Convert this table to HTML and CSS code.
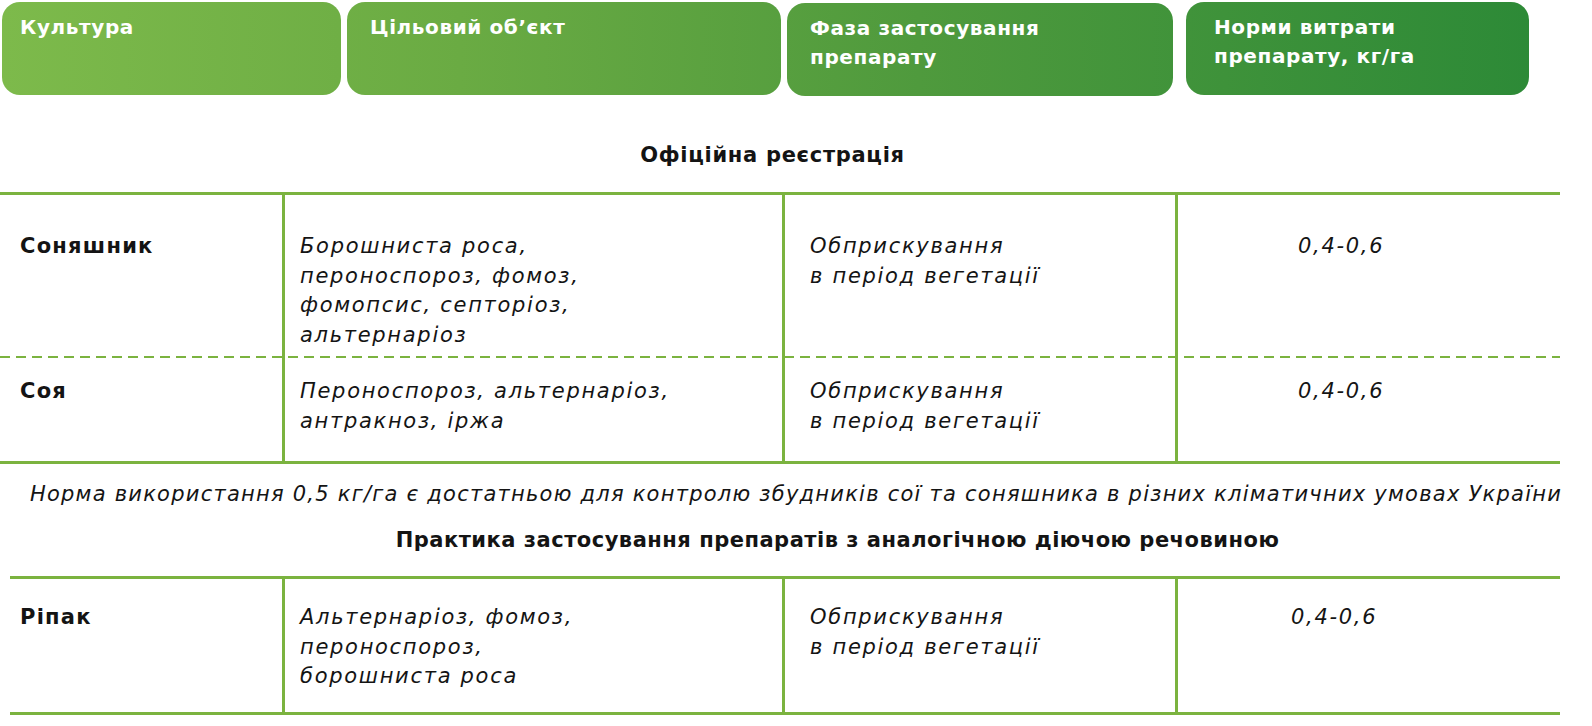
FILE: index.html
```html
<!DOCTYPE html>
<html lang="uk">
<head>
<meta charset="utf-8">
<title>Регламент застосування</title>
<link rel="stylesheet" href="styles.css">
</head>
<body>
<div class="page">
  <div class="head-row">
    <div class="hcell h1">Культура</div>
    <div class="hcell h2">Цільовий об’єкт</div>
    <div class="hcell h3">Фаза застосування<br>препарату</div>
    <div class="hcell h4">Норми витрати<br>препарату, кг/га</div>
  </div>

  <div class="section-title st1">Офіційна реєстрація</div>

  <div class="table t1">
    <div class="row r-sun dashed">
      <div class="cell c1 crop">Соняшник</div>
      <div class="cell c2 it">Борошниста роса,<br>пероноспороз, фомоз,<br>фомопсис, септоріоз,<br>альтернаріоз</div>
      <div class="cell c3 it">Обприскування<br>в період вегетації</div>
      <div class="cell c4 it">0,4-0,6</div>
    </div>
    <div class="row r-soy">
      <div class="cell c1 crop">Соя</div>
      <div class="cell c2 it">Пероноспороз, альтернаріоз,<br>антракноз, іржа</div>
      <div class="cell c3 it">Обприскування<br>в період вегетації</div>
      <div class="cell c4 it">0,4-0,6</div>
    </div>
  </div>

  <div class="note">Норма використання 0,5 кг/га є достатньою для контролю збудників сої та соняшника в різних кліматичних умовах України</div>

  <div class="section-title st2">Практика застосування препаратів з аналогічною діючою речовиною</div>

  <div class="table t2">
    <div class="row r-rape">
      <div class="cell c1 crop">Ріпак</div>
      <div class="cell c2 it">Альтернаріоз, фомоз,<br>пероноспороз,<br>борошниста роса</div>
      <div class="cell c3 it">Обприскування<br>в період вегетації</div>
      <div class="cell c4 it c4b">0,4-0,6</div>
    </div>
  </div>
</div>
</body>
</html>
```
FILE: styles.css
```css
html, body {
  margin: 0;
  padding: 0;
  background: #ffffff;
}

body {
  font-family: "DejaVu Sans", "Noto Sans", sans-serif;
  color: #141414;
  font-size: 21px;
}

.page {
  width: 1592px;
  overflow: hidden;
}

/* header */
.head-row {
  display: flex;
  margin-top: 2px;
  height: 93px;
}

.hcell {
  box-sizing: border-box;
  height: 93px;
  border-radius: 18px;
  color: #ffffff;
  font-weight: 700;
  font-size: 20px;
  letter-spacing: 0.6px;
  line-height: 29px;
  padding-top: 11px;
  background-image: linear-gradient(90deg, #7dba4b 0%, #6aab43 30%, #4f9a3d 60%, #2d8a37 100%);
  background-size: 1528px 100%;
  background-repeat: no-repeat;
}

.h1 {
  width: 339px;
  margin-left: 2px;
  padding-left: 18px;
  background-position: 0 0;
}

.h2 {
  width: 434px;
  margin-left: 6px;
  padding-left: 23px;
  background-position: -345px 0;
}

.h3 {
  width: 386px;
  margin-left: 6px;
  margin-top: 1px;
  padding-left: 23px;
  background-position: -785px 0;
}

.h4 {
  width: 343px;
  margin-left: 13px;
  padding-left: 28px;
  background-position: -1184px 0;
}

/* titles */
.section-title {
  font-weight: 700;
  font-size: 21px;
  line-height: 30px;
  text-align: center;
}

.st1 {
  margin-top: 45px;
  width: 1545px;
  letter-spacing: 0.7px;
}

.st2 {
  margin-top: 16px;
  width: 1675px;
  letter-spacing: 0.5px;
}

/* tables */
.table {
  border-top: 3px solid #7bb33f;
  border-bottom: 3px solid #7bb33f;
}

.t1 {
  margin-top: 22px;
  width: 1560px;
}

.t2 {
  margin-top: 21px;
  margin-left: 10px;
  width: 1550px;
}

.row {
  display: grid;
  grid-template-columns: 282px 500px 393px 385px;
  line-height: 29.5px;
}

.t2 .row {
  grid-template-columns: 272px 500px 393px 385px;
}

.dashed {
  background-image: repeating-linear-gradient(90deg, #7bb33f 0 10px, transparent 10px 16px);
  background-size: 100% 2px;
  background-position: 0 100%;
  background-repeat: no-repeat;
}

.cell {
  box-sizing: border-box;
}

.c2, .c3, .c4 {
  border-left: 3px solid #7bb33f;
}

.c1 { padding-left: 20px; }
.t2 .c1 { padding-left: 10px; }
.c2 { padding-left: 15px; }
.c3 { padding-left: 25px; }
.c4 { padding-left: 120px; }
.c4b { padding-left: 113px; }

.crop {
  font-weight: 700;
  letter-spacing: 1.25px;
}

.it {
  font-style: italic;
  font-weight: 400;
  letter-spacing: 1.7px;
}

.r-sun .cell {
  padding-top: 37px;
  padding-bottom: 8px;
}

.r-soy .cell {
  padding-top: 19px;
  padding-bottom: 25px;
}

.r-rape .cell {
  padding-top: 24px;
  padding-bottom: 20px;
}

/* note */
.note {
  margin-top: 15px;
  font-style: italic;
  letter-spacing: 1.24px;
  line-height: 30px;
  text-align: center;
  white-space: nowrap;
  width: 1592px;
}
```
